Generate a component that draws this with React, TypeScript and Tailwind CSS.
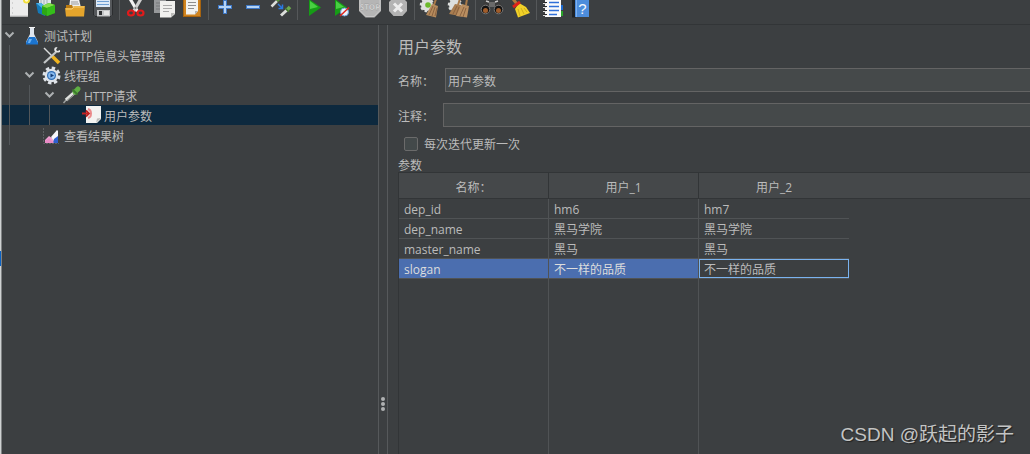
import { Fragment, useState, type ReactNode } from 'react';
import clsx from 'clsx';

type IconName =
  | 'new' | 'templates' | 'open' | 'save'
  | 'cut' | 'copy' | 'paste'
  | 'expand' | 'collapse' | 'toggle'
  | 'start' | 'startNoPauses' | 'stop' | 'shutdown'
  | 'clear' | 'clearAll'
  | 'search' | 'resetSearch'
  | 'functions' | 'help';

// Toolbar drawings, 28x18 each. The top of the toolbar is scrolled out of view.
const toolbarIcons: Record<IconName, ReactNode> = {
  new: (
    <>
      <path d="M5 0H23V16.5H5Z" fill="#ececec" />
      <path d="M5 15.5H23V16.5H5Z" fill="#c4c4c4" />
      <path d="M7 3h1M7 8h1M7 13h1" stroke="#b5b5b5" />
      <circle cx="21.5" cy="0" r="3.5" fill="#f3df3c" />
      <circle cx="21.5" cy="0" r="1.7" fill="#fffbd0" />
    </>
  ),
  templates: (
    <>
      <path d="M6 0H18V5H6Z" fill="#dfe6ea" />
      <path d="M8 0V4M11 0V4M14 0V4" stroke="#a5b0b6" />
      <path d="M3 3L8 3L12 6V16L5 13Z" fill="#1479b8" />
      <path d="M3 3L8 3L12 6L9 8Z" fill="#4fb1e6" />
      <path d="M9 6L16 3L22 5V13L14 16L9 14Z" fill="#2da814" />
      <path d="M9 6L16 3L22 5L14 8Z" fill="#83dd4b" />
      <path d="M14 8L22 5V13L14 16Z" fill="#35bd1b" />
    </>
  ),
  open: (
    <>
      <path d="M9 0L18 -1L20 8H8Z" fill="#eeeeee" />
      <path d="M10 2H17M10 4H18" stroke="#9b9b9b" />
      <path d="M5 5H11L12 7H23V16H5Z" fill="#b97a12" />
      <path d="M4 8H11L13 6H24L23 16.5H5Z" fill="#e5a52c" />
      <path d="M5 9H11L13 7H23" stroke="#f7cf73" fill="none" />
    </>
  ),
  save: (
    <>
      <path d="M4 0H24V15L22 17H6L4 15Z" fill="#55585b" />
      <path d="M4.5 0V15L6 16.5H22L23.5 15V0" fill="none" stroke="#2b2d2f" />
      <path d="M7 0H21V7H7Z" fill="#dce9f7" />
      <path d="M8 1.5H20M8 4.5H20" stroke="#6f9fd3" />
      <path d="M8 10H21V16.5H8Z" fill="#c5c7c8" />
      <path d="M10 11H13V15H10Z" fill="#303234" />
      <path d="M15 11H20V15H15Z" fill="#e6e6e6" />
    </>
  ),
  cut: (
    <>
      <path d="M7 0L10 -1L17 11L14 12Z" fill="#f2f2f2" />
      <path d="M20 0L17 -1L10 11L13 12Z" fill="#cfcfcf" />
      <circle cx="13.5" cy="8" r="1" fill="#777" />
      <ellipse cx="9" cy="13" rx="3" ry="2.5" fill="none" stroke="#e01b1b" strokeWidth="2.2" />
      <ellipse cx="18.5" cy="13" rx="3" ry="2.5" fill="none" stroke="#e01b1b" strokeWidth="2.2" />
    </>
  ),
  copy: (
    <>
      <path d="M4 0H16V13H4Z" fill="#96989a" />
      <path d="M6 3H10M6 6H10M6 9H10" stroke="#77797b" />
      <path d="M10 1H25V14L21 17.5H10Z" fill="#f0f0ee" />
      <path d="M13 5.5H22M13 8.5H22M13 11.5H19" stroke="#a9a9a9" />
      <path d="M25 13L21 17.5V13Z" fill="#bcbcba" />
    </>
  ),
  paste: (
    <>
      <path d="M5 0H23V17H5Z" fill="#a8640f" />
      <path d="M6 0H22V16H6Z" fill="#cf8420" />
      <path d="M8 0H20V11L17 14.5H8Z" fill="#f2f2f0" />
      <path d="M10 2.5H18M10 5.5H18M10 8.5H16" stroke="#8e8e8e" />
      <path d="M20 11L17 14.5V11Z" fill="#b3b3b1" />
    </>
  ),
  expand: (
    <>
      <path d="M14 0V14M7 7H21" stroke="#3f78c5" strokeWidth="4" />
      <path d="M14 1V13M8 7H20" stroke="#b4d3f5" strokeWidth="2" />
    </>
  ),
  collapse: (
    <>
      <path d="M7 7H21" stroke="#3f78c5" strokeWidth="4" />
      <path d="M8 7H20" stroke="#b4d3f5" strokeWidth="2" />
    </>
  ),
  toggle: (
    <>
      <path d="M4.5 6.5L10 1" stroke="#dcdedb" strokeWidth="2.5" />
      <path d="M10 1L13 -2" stroke="#58903d" strokeWidth="3" />
      <path d="M11 4L15 8M15.5 4.5V8.5H11.5" stroke="#2b79df" strokeWidth="1.5" fill="none" />
      <path d="M14 15.5L20 10" stroke="#dcdedb" strokeWidth="3" />
      <path d="M19.5 10.5L23 7" stroke="#6ca94d" strokeWidth="3.5" />
      <path d="M18 8L22 12" stroke="#416b30" strokeWidth="1.2" />
    </>
  ),
  start: (
    <>
      <path d="M9 -1L21 7.5L9 16Z" fill="#169c16" />
      <path d="M10 1L18 7L10 9Z" fill="#48cf42" />
    </>
  ),
  startNoPauses: (
    <>
      <path d="M7 -1L19 7.5L7 16Z" fill="#169c16" />
      <path d="M8 1L16 7L8 9Z" fill="#48cf42" />
      <circle cx="16.5" cy="12" r="4" fill="#eef4fb" stroke="#6b9ed8" />
      <path d="M12 16L21 7.5" stroke="#e0241b" strokeWidth="1.5" />
    </>
  ),
  stop: (
    <>
      <path d="M3 0V11L9.5 17.5H18.5L25 11V0Z" fill="#b5b5b5" />
      <path d="M4 0V10.5L10 16.5H18L24 10.5V0" fill="none" stroke="#c8c8c8" />
      <text x="14" y="10" textAnchor="middle" fontSize="8" fontWeight="700" fill="#e2e2e2" stroke="#8d8d8d" strokeWidth="0.3">STOP</text>
    </>
  ),
  shutdown: (
    <>
      <path d="M5 2L9 -2H19L23 2V11L18.5 16H9.500L5 11Z" fill="#b3b3b3" />
      <path d="M10 3.5L18 11.5M18 3.5L10 11.5" stroke="#ececec" strokeWidth="3" />
    </>
  ),
  clear: (
    <>
      <circle cx="10" cy="5" r="6" fill="#dddfdd" stroke="#dddfdd" strokeWidth="2.5" strokeDasharray="2.5 2" />
      <circle cx="11" cy="5" r="2.8" fill="#6cba2c" />
      <path d="M19 -1L17 5" stroke="#a97a49" strokeWidth="2" />
      <path d="M15 4L21 6L19 17.5L9 15Z" fill="#b58a5c" />
      <path d="M16 6L12 15M18 7L15 16M20 8L18 16" stroke="#80593a" strokeWidth="0.8" />
    </>
  ),
  clearAll: (
    <>
      <circle cx="10" cy="5" r="6" fill="#dddfdd" stroke="#dddfdd" strokeWidth="2.5" strokeDasharray="2.5 2" />
      <path d="M15 -1L13 5M22 -1L21 5" stroke="#a97a49" strokeWidth="2" />
      <path d="M10 4L16 5L15 16L4 14Z" fill="#a97d50" />
      <path d="M17 4L24 6L22 17.5L11 16Z" fill="#b98e60" />
      <path d="M12 6L8 14M14 7L11 15M19 7L15 16M21 8L18 17" stroke="#80593a" strokeWidth="0.8" />
    </>
  ),
  search: (
    <>
      <path d="M7 0L12 1V7L5 12L3 9Z" fill="#3b3b3b" />
      <path d="M21 0L16 1V7L23 12L25 9Z" fill="#3b3b3b" />
      <path d="M11 2H17V7H11Z" fill="#6a6a6a" />
      <path d="M8 1L11 2M20 1L17 2" stroke="#c5c5c5" strokeWidth="1.5" />
      <circle cx="7.5" cy="9.5" r="4.3" fill="#111" stroke="#777" />
      <circle cx="20.5" cy="9.5" r="4.3" fill="#111" stroke="#777" />
      <circle cx="7.5" cy="10.5" r="2.5" fill="#a05d2c" />
      <circle cx="20.5" cy="10.5" r="2.5" fill="#a05d2c" />
    </>
  ),
  resetSearch: (
    <>
      <path d="M7 -1L11 4" stroke="#b27a3c" strokeWidth="3" />
      <path d="M13 3L20 7L24 13L12 17.5L9 9Z" fill="#f1d128" />
      <path d="M12 9L14 16M15 8L18 14M18 8L21 12" stroke="#c4a516" strokeWidth="0.8" />
      <path d="M7 7L14 2" stroke="#dd2018" strokeWidth="3" />
    </>
  ),
  functions: (
    <>
      <path d="M19 5H24V10H19Z" fill="#1d6bd0" />
      <path d="M19 11H24V16H19Z" fill="#2aa52a" />
      <path d="M6 0H22V17H6Z" fill="#fbfbfb" />
      <path d="M10 2.5H20M10 6.5H20M10 10.5H20M10 14.5H18" stroke="#2f6fd8" strokeWidth="1.5" />
      <path d="M4 2.5H8M4 6.5H8M4 10.5H8M4 14.5H8" stroke="#2c2c2c" />
      <path d="M4 3.5H7M4 7.5H7M4 11.5H7M4 15.5H7" stroke="#ddd" />
    </>
  ),
  help: (
    <>
      <path d="M5 0H9V17.5H5Z" fill="#1e2124" />
      <path d="M8 0H22V17H8Z" fill="#4d8ddc" />
      <path d="M9 0H10V17H9Z" fill="#7fb2ef" />
      <text x="15.5" y="14" textAnchor="middle" fontSize="15" fill="#f4f8fd" className="font-['Liberation_Sans',sans-serif]">?</text>
    </>
  ),
};

const toolbarGroups: { icon: IconName; title: string }[][] = [
  [
    { icon: 'new', title: '新建' },
    { icon: 'templates', title: '模板' },
    { icon: 'open', title: '打开' },
    { icon: 'save', title: '保存' },
  ],
  [
    { icon: 'cut', title: '剪切' },
    { icon: 'copy', title: '复制' },
    { icon: 'paste', title: '粘贴' },
  ],
  [
    { icon: 'expand', title: '全部展开' },
    { icon: 'collapse', title: '全部折叠' },
    { icon: 'toggle', title: '切换' },
  ],
  [
    { icon: 'start', title: '启动' },
    { icon: 'startNoPauses', title: '不停顿开始' },
    { icon: 'stop', title: '停止' },
    { icon: 'shutdown', title: '关闭' },
  ],
  [
    { icon: 'clear', title: '清除' },
    { icon: 'clearAll', title: '清除全部' },
  ],
  [
    { icon: 'search', title: '查找' },
    { icon: 'resetSearch', title: '重置搜索' },
  ],
  [
    { icon: 'functions', title: '函数助手' },
    { icon: 'help', title: '帮助' },
  ],
];

// Tree node drawings, 20x20 each
const treeIcons = {
  plan: (
    <>
      <path d="M8 3H12V9L16 17V19H4V17L8 9Z" fill="#dfe6ee" />
      <path d="M7 2.5H13" stroke="#f4f4f4" />
      <path d="M7 12H13L16 17.5V19.5H4V17.5Z" fill="#1b74cf" />
      <path d="M7 14H10L8 18H6Z" fill="#69b2f5" />
    </>
  ),
  header: (
    <>
      <path d="M2 3L10 11" stroke="#d9dbdb" strokeWidth="1.5" />
      <path d="M10 11L17 18" stroke="#f0b41e" strokeWidth="3.5" />
      <path d="M2 18L14 7" stroke="#c3c6c7" strokeWidth="2.2" />
      <path d="M13 2.5C11 5 13 9 18 7L18 5L15.5 6L14 5L15.5 2Z" fill="#e4e6e6" />
    </>
  ),
  group: (
    <>
      <circle cx="9.5" cy="10.5" r="7.5" fill="none" stroke="#dfe3e8" strokeWidth="3" strokeDasharray="3.4 2.49" />
      <circle cx="9.5" cy="10.5" r="6.8" fill="#dde2e8" />
      <circle cx="9.5" cy="10.5" r="4.5" fill="#2f6db5" />
      <circle cx="9.5" cy="10.5" r="3.3" fill="#8bbcf0" />
      <path d="M8.5 8.5L12 10.5L8.5 12.5Z" fill="#173f78" />
    </>
  ),
  sampler: (
    <>
      <path d="M1.5 18L5 14" stroke="#9da09f" strokeWidth="1.5" />
      <path d="M4 15L13 7" stroke="#dfe1de" strokeWidth="3.5" />
      <path d="M5 15.5L13.5 8" stroke="#777b78" strokeWidth="1" />
      <path d="M13 7L16 4" stroke="#5fae43" strokeWidth="5" strokeLinecap="round" />
      <path d="M10.5 4.5L15.5 9.5" stroke="#3c7a2c" strokeWidth="1.8" />
    </>
  ),
  preprocessor: (
    <>
      <path d="M4 1H19V14L15 18H4Z" fill="#f3f3f1" />
      <path d="M19 13L14 18L15 13.5Z" fill="#bdbdba" />
      <path d="M6 4C10 5 10 12 6 13" stroke="#eb8c8c" strokeWidth="2" fill="none" />
      <path d="M0 8.5H6M4 5.5L7 8.5L4 11.5" stroke="#c32222" strokeWidth="1.8" fill="none" />
    </>
  ),
  listener: (
    <>
      <path d="M1.5 3V18.5H17" stroke="#5d6164" fill="none" strokeDasharray="2 1" />
      <path d="M3 18V15L7 11L10 13L13 10V18Z" fill="#f0a3d3" />
      <path d="M9 12L15 5L16 6V13L12 16Z" fill="#f7f7fb" />
      <path d="M11 18L12 14L16 11V18Z" fill="#2d5fd0" />
      <path d="M3 18V16L7 13L12 18Z" fill="#e98bc6" />
    </>
  ),
};

interface TreeNode {
  label: string;
  depth: number;
  icon: keyof typeof treeIcons;
  open?: boolean;
}

const nodes: TreeNode[] = [
  { label: '测试计划', depth: 0, icon: 'plan', open: true },
  { label: 'HTTP信息头管理器', depth: 1, icon: 'header' },
  { label: '线程组', depth: 1, icon: 'group', open: true },
  { label: 'HTTP请求', depth: 2, icon: 'sampler', open: true },
  { label: '用户参数', depth: 3, icon: 'preprocessor' },
  { label: '查看结果树', depth: 1, icon: 'listener' },
];

const columns = ['名称：', '用户_1', '用户_2'];

const rows = [
  ['dep_id', 'hm6', 'hm7'],
  ['dep_name', '黑马学院', '黑马学院'],
  ['master_name', '黑马', '黑马'],
  ['slogan', '不一样的品质', '不一样的品质'],
];

const Toolbar = () => (
  <header className="flex h-[25px] items-start overflow-hidden border-b border-[#323537] pl-[3px]">
    {toolbarGroups.map((group, i) => (
      <Fragment key={i}>
        {i > 0 && <div className="mx-[2px] h-5 w-px bg-[#55585a]" />}
        {group.map(({ icon, title }) => (
          <button key={icon} type="button" title={title} aria-label={title} className="shrink-0">
            <svg width="28" height="18" viewBox="0 0 28 18" className="block">
              {toolbarIcons[icon]}
            </svg>
          </button>
        ))}
      </Fragment>
    ))}
  </header>
);

const Tree = () => {
  const [selected, setSelected] = useState('用户参数');

  return (
    <nav className="w-[377px] shrink-0 border-r border-[#56595b]">
      <ul>
        {nodes.map((node) => (
          <li
            key={node.label}
            onClick={() => setSelected(node.label)}
            className={clsx('flex h-5', node.label === selected && 'bg-[#0d293e]')}
          >
            {Array.from({ length: node.depth }, (_, i) => (
              <div key={i} className="w-5 pl-[7px]">
                <div className="h-full w-px bg-[#53575a]" />
              </div>
            ))}
            {node.open ? (
              <button type="button" aria-label="折叠" className="w-5">
                <svg width="20" height="20" viewBox="0 0 20 20" className="block">
                  <path d="M3.5 7.5L7.5 11.5L11.5 7.5" fill="none" stroke="#adb0b2" strokeWidth="2" />
                </svg>
              </button>
            ) : (
              <div className="w-5" />
            )}
            <svg width="20" height="20" viewBox="0 0 20 20">
              {treeIcons[node.icon]}
            </svg>
            <span className="pl-[2px] leading-6">{node.label}</span>
          </li>
        ))}
      </ul>
    </nav>
  );
};

const ParamTable = () => (
  <div className="flex flex-1 flex-col border-t border-l border-[#323537]">
    <table className="w-full table-fixed border-separate border-spacing-0 text-left">
      <colgroup>
        <col className="w-[150px]" />
        <col className="w-[150px]" />
        <col className="w-[150px]" />
        <col />
      </colgroup>
      <thead>
        <tr className="h-[26px] bg-[#45484a]">
          {columns.map((name, i) => (
            <th
              key={name}
              className={clsx('border-b border-[#323537] p-0 pt-1 text-center font-normal', i < 2 && 'border-r')}
            >
              {name}
            </th>
          ))}
          <td className="border-b border-[#323537] p-0" />
        </tr>
      </thead>
      <tbody>
        {rows.map((row, r) => (
          <tr key={row[0]} className="h-5">
            {row.map((value, c) => {
              const last = r === rows.length - 1;
              return (
                <td
                  key={c}
                  className={clsx(
                    'border-b border-[#505355] p-0',
                    c < 2 && 'border-r',
                    last && c < 2 && 'bg-[#4b6eaf] text-[#dddddd]',
                  )}
                >
                  <div
                    className={clsx(
                      'h-[19px] border px-1 leading-5',
                      last && c === 2 ? 'border-[#7ab3ef]' : 'border-transparent',
                    )}
                  >
                    {value}
                  </div>
                </td>
              );
            })}
            <td className="p-0" />
          </tr>
        ))}
      </tbody>
    </table>
    {/* column lines run on below the last row */}
    <div className="flex flex-1">
      <div className="w-[150px] border-r border-[#505355]" />
      <div className="w-[150px] border-r border-[#505355]" />
    </div>
  </div>
);

const ParamPanel = () => {
  const [name, setName] = useState('用户参数');
  const [comment, setComment] = useState('');
  const [perIteration, setPerIteration] = useState(false);

  return (
    <main className="flex min-w-0 flex-1 flex-col border-l border-[#56595b] pl-[10px]">
      <h1 className="mt-[10px] mb-[9px] text-[16px] leading-6">用户参数</h1>
      <div className="flex h-6 items-center">
        <label htmlFor="name" className="w-[47px] shrink-0 pt-1">名称：</label>
        <input
          id="name"
          value={name}
          onChange={(e) => setName(e.target.value)}
          className="h-6 min-w-0 flex-1 border border-r-0 border-[#646464] bg-[#45494a] px-[2px] pt-[2px] outline-none"
        />
      </div>
      <div className="mt-[11px] flex h-6 items-center">
        <label htmlFor="comment" className="w-[45px] shrink-0 pt-1">注释：</label>
        <input
          id="comment"
          value={comment}
          onChange={(e) => setComment(e.target.value)}
          className="h-6 min-w-0 flex-1 border border-r-0 border-[#646464] bg-[#45494a] px-[2px] pt-[2px] outline-none"
        />
      </div>
      <label className="mt-2 flex h-[18px] items-center gap-[6px] pl-[6px]">
        <input
          type="checkbox"
          checked={perIteration}
          onChange={(e) => setPerIteration(e.target.checked)}
          className="size-[14px] appearance-none rounded-[2px] border border-[#6b6b6b] bg-[#43494a] checked:bg-[#4b6eaf]"
        />
        <span className="pt-[2px]">每次迭代更新一次</span>
      </label>
      <h2 className="mt-[5px] h-[14px] leading-4">参数</h2>
      <ParamTable />
    </main>
  );
};

export default function App() {
  return (
    <div
      lang="zh-CN"
      className="relative flex min-h-screen overflow-hidden bg-[#3c3f41] font-['Open_Sans','Noto_Sans_CJK_SC',sans-serif] text-[12px] text-[#bbbbbb]"
    >
      {/* sliver of the window behind */}
      <div className="w-[2px] shrink-0 border-r border-[#808384] bg-[#cfd2d2] pt-[251px]">
        <div className="h-[15px] bg-[#0a62c4]" />
      </div>

      <div className="flex min-w-0 flex-1 flex-col">
        <Toolbar />
        <div className="flex flex-1">
          <Tree />
          <div className="flex w-2 shrink-0 cursor-col-resize flex-col items-center justify-end gap-px pb-[43px]">
            <div className="size-1 rounded-full bg-[#afb1b2]" />
            <div className="size-1 rounded-full bg-[#afb1b2]" />
            <div className="size-1 rounded-full bg-[#afb1b2]" />
          </div>
          <ParamPanel />
        </div>
      </div>

      <p className="absolute right-4 bottom-[5px] font-['Liberation_Sans','Noto_Sans_CJK_SC',sans-serif] text-[19px] leading-7 text-[#c3c4c4] [text-shadow:1px_1px_1px_#222]">
        CSDN @跃起的影子
      </p>
    </div>
  );
}
